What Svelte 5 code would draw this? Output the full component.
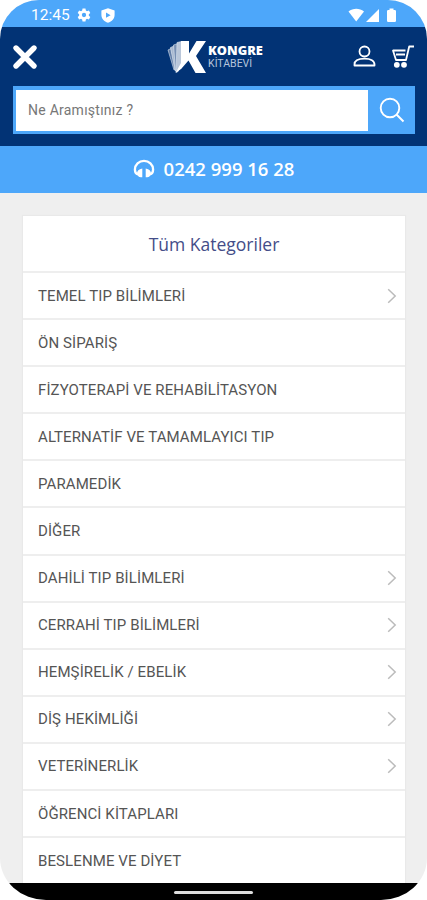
<script lang="ts">
  const phone = "0242 999 16 28";

  const categories = [
    { name: "TEMEL TIP BİLİMLERİ", nested: true },
    { name: "ÖN SİPARİŞ", nested: false },
    { name: "FİZYOTERAPİ VE REHABİLİTASYON", nested: false },
    { name: "ALTERNATİF VE TAMAMLAYICI TIP", nested: false },
    { name: "PARAMEDİK", nested: false },
    { name: "DİĞER", nested: false },
    { name: "DAHİLİ TIP BİLİMLERİ", nested: true },
    { name: "CERRAHİ TIP BİLİMLERİ", nested: true },
    { name: "HEMŞİRELİK / EBELİK", nested: true },
    { name: "DİŞ HEKİMLİĞİ", nested: true },
    { name: "VETERİNERLİK", nested: true },
    { name: "ÖĞRENCİ KİTAPLARI", nested: false },
    { name: "BESLENME VE DİYET", nested: false },
  ];

  let query = $state("");
</script>

<div class="screen">
  <div class="status">
    <span class="clock">12:45</span>
    <svg class="gear" width="14" height="14" viewBox="0 0 24 24">
      <path
        fill="#fff"
        fill-rule="evenodd"
        d="M9.5 1h5l.7 3.3 1.9 1.1 3.3-1.1 2.4 4.2-2.5 2.3v2.4l2.5 2.3-2.4 4.2-3.3-1.1-1.9 1.1-.7 3.3h-5l-.7-3.3-1.9-1.1-3.3 1.1-2.4-4.2 2.5-2.3v-2.4L1.2 8.5l2.4-4.2 3.3 1.1 1.9-1.1zM12 8.3a3.7 3.7 0 1 0 0 7.4 3.7 3.7 0 0 0 0-7.4z"
      />
    </svg>
    <svg class="shield" width="14" height="15" viewBox="0 0 14 15">
      <path fill="#fff" fill-rule="evenodd" d="M7 .3 13.6 2.5V7c0 3.6-2.7 6.5-6.6 7.7C3.1 13.5.4 10.6.4 7V2.5zM5 4.5v5.3l4.6-2.6z" />
    </svg>
    <svg class="signals" width="50" height="15" viewBox="0 0 50 15">
      <path fill="#fff" d="M.5 3.5C5-.3 11.5-.3 16 3.5L8.2 13.5z" />
      <path fill="#fff" d="M31 1v13H18z" />
      <path fill="#fff" d="M41.5.5h4V2h1.2q1.3 0 1.3 1.3v9.4q0 1.3-1.3 1.3h-6.4q-1.3 0-1.3-1.3V3.3q0-1.3 1.3-1.3h1.2z" />
    </svg>
  </div>

  <header>
    <div class="bar">
      <button class="close" aria-label="Kapat">
        <svg width="26" height="26" viewBox="0 0 26 26">
          <path d="M4 4l18 18M22 4L4 22" stroke="#fff" stroke-width="5.4" stroke-linecap="round" />
        </svg>
      </button>
      <div class="logo">
        <svg width="40" height="34" viewBox="0 0 40 34">
          <g stroke="#dce5f1" stroke-width=".6">
            <path fill="#5f7ba6" d="M1 10l3-1.5 5 20.5-2 1z" />
            <path fill="#a7b7cf" d="M3.5 7.5L7 6l3.5 24.5H8z" />
            <path fill="#7890b4" d="M6.5 5L11 3.5V32L8.5 31z" />
            <path fill="#bac7da" d="M10 2.5L14.5 1.5V28L9 32.5z" />
          </g>
          <path fill="#fff" d="M14 1h8v12.5L29.5 1H39L29 16l10 17H28.5L21.5 20.5 14.5 28.5 8.5 33l5.5-10z" />
        </svg>
        <div class="brand">
          <strong>KONGRE</strong>
          <span>KİTABEVİ</span>
        </div>
      </div>
      <div class="actions">
        <button aria-label="Hesabım">
          <svg width="24" height="24" viewBox="0 0 24 24" fill="none" stroke="#fff" stroke-width="1.8">
            <circle cx="11.5" cy="6.5" r="5" />
            <path stroke-linejoin="round" d="M1.5 20.500v-1c0-3.700 3.500-5.800 10-5.800s10 2.100 10 5.800v1z" />
          </svg>
        </button>
        <button aria-label="Sepetim">
          <svg width="24" height="24" viewBox="0 0 24 24" fill="none" stroke="#fff" stroke-width="1.8">
            <path stroke-linejoin="round" d="M23 1.5h-4.800L15 15H5L2 5.500h12.500M5 9.500h9" />
            <circle cx="5.800" cy="19.800" r="2.900" fill="#fff" stroke="none" />
            <circle cx="13" cy="19.800" r="2.900" fill="#fff" stroke="none" />
          </svg>
        </button>
      </div>
    </div>
    <div class="search">
      <input bind:value={query} placeholder="Ne Aramıştınız ?" />
      <button aria-label="Ara">
        <svg width="26" height="26" viewBox="0 0 26 26" fill="none" stroke="#fff" stroke-width="1.9">
          <circle cx="11" cy="11" r="9.3" />
          <path d="M17.5 17.5l7 7" />
        </svg>
      </button>
    </div>
  </header>

  <div class="phone">
    <svg width="22" height="20" viewBox="0 0 22 20">
      <path fill="none" stroke="#fff" stroke-width="2.300" d="M5 15.500C2.700 14.800 1.900 12.900 1.900 10.500a9.100 8.700 0 0 1 18.200 0c0 2.400-.8 4.300-3.100 5" />
      <path fill="#fff" d="M9.300 9.500v8.800H8C5.500 18.300 4 16.500 4 14.300s1.700-4.300 5.300-4.800zM12.700 9.500v8.800H14c2.500 0 4-1.800 4-4s-1.700-4.300-5.300-4.800z" />
    </svg>
    <span>{phone}</span>
  </div>

  <main>
    <div class="card">
      <h2>Tüm Kategoriler</h2>
      {#each categories as category (category.name)}
        <div class="row">
          <span>{category.name}</span>
          {#if category.nested}
            <svg width="10" height="16" viewBox="0 0 10 16">
              <path d="M1.2 1.2L8.2 8 1.2 14.8" fill="none" stroke="#bbb" stroke-width="1.5" />
            </svg>
          {/if}
        </div>
      {/each}
    </div>
  </main>

  <div class="nav"><span></span></div>
</div>

<style>
  :global(body) {
    margin: 0;
    background: #fff;
  }
  .screen {
    display: flex;
    flex-direction: column;
    width: 427px;
    height: 900px;
    overflow: hidden;
    border-radius: 39px 39px 46px 46px / 39px 39px 42px 42px;
    background: #efefef;
    font-family: Roboto, sans-serif;
  }
  button {
    display: flex;
    padding: 0;
    border: none;
    background: none;
    cursor: pointer;
  }
  .status {
    flex: none;
    display: flex;
    align-items: center;
    height: 27px;
    box-sizing: border-box;
    padding: 3px 29px 0 31px;
    background: #4da7fa;
  }
  .clock {
    width: 46px;
    color: #fff;
    font-size: 15.5px;
  }
  .shield {
    margin-left: 10px;
  }
  .signals {
    margin-left: auto;
  }
  header {
    flex: none;
    height: 119px;
    background: #023375;
  }
  .bar {
    display: flex;
    align-items: center;
    justify-content: space-between;
    height: 59px;
    padding: 0 12px;
  }
  .logo {
    display: flex;
    align-items: center;
    margin-left: 39px;
  }
  .brand {
    display: grid;
    margin-left: 1px;
    color: #fff;
    font-size: 10.5px;
    line-height: 13px;
  }
  .brand strong {
    font-family: "Open Sans", sans-serif;
    font-size: 12.8px;
    font-weight: 800;
  }
  .brand span {
    color: #b6c5dc;
  }
  .actions {
    display: flex;
    gap: 14px;
  }
  .search {
    display: flex;
    height: 48px;
    margin: 0 12px 0 13px;
    background: #4da7fa;
  }
  input {
    flex: 1;
    min-width: 0;
    margin: 4px 0 3px 3px;
    padding: 0 12px 2px;
    border: none;
    background: #fff;
    color: #333;
    font: 14px Roboto, sans-serif;
    letter-spacing: 0.25px;
    outline: none;
  }
  input::placeholder {
    color: #777;
  }
  .search button {
    align-items: center;
    justify-content: center;
    width: 47px;
  }
  .phone {
    flex: none;
    display: flex;
    align-items: center;
    justify-content: center;
    gap: 9px;
    height: 47px;
    box-sizing: border-box;
    padding-bottom: 2px;
    background: #4da7fa;
    color: #fff;
    font: 600 18.5px "Open Sans", sans-serif;
  }
  main {
    flex: 1;
    min-height: 0;
    overflow: hidden;
    padding: 23px 22px 0 23px;
  }
  .card {
    background: #fff;
    box-shadow: 0 0 1px 1px #e9e9e9;
  }
  h2 {
    height: 55px;
    margin: 0;
    color: #444d88;
    font: 400 17.5px/56px "Open Sans", sans-serif;
    text-align: center;
  }
  .row {
    display: flex;
    align-items: center;
    justify-content: space-between;
    height: 47.1px;
    box-sizing: border-box;
    padding: 0 8px 0 15px;
    border-top: 2px solid #eee;
    color: #555;
    font-size: 15px;
    letter-spacing: 0.1px;
  }
  .nav {
    flex: none;
    display: flex;
    justify-content: center;
    height: 17px;
    background: #000;
  }
  .nav span {
    width: 79px;
    height: 3px;
    margin-top: 8px;
    border-radius: 2px;
    background: #ddd;
  }
</style>
